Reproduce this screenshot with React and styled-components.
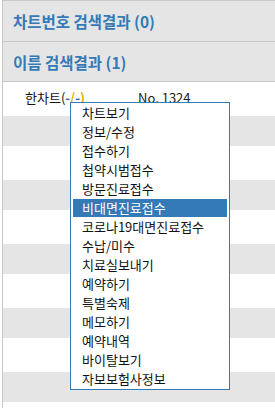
import React from "react";
import styled, { createGlobalStyle } from "styled-components";

const Global = createGlobalStyle`
  html, body { margin: 0; padding: 0; background: #fff; }
  body { font-family: "Noto Sans CJK KR", "Liberation Sans", sans-serif; overflow: hidden; }
`;

const Panel = styled.div`
  position: relative;
  margin-left: 2px;
  height: 408px;
  border-top: 1px solid #c8c8c8;
  border-left: 1px solid #c8c8c8;
  box-sizing: border-box;
  overflow: hidden;
`;

const SectionHeader = styled.div`
  height: ${(p) => p.$h}px;
  display: flex;
  align-items: center;
  padding-left: 10px;
  background: #e5e5e5;
  border-bottom: 1px solid #c8c8c8;
  color: #337ab7;
  font-size: 15.5px;
  font-weight: bold;
  box-sizing: border-box;
`;

const Row = styled.div`
  height: ${(p) => (p.$gray ? 30 : 34)}px;
  background: ${(p) => (p.$gray ? "#e5e5e5" : "#fff")};
  display: flex;
  align-items: center;
  font-size: 13px;
  color: #111;
`;

const Name = styled.span`
  width: 113px;
  padding-left: 22px;
  margin-top: -4px;
`;

const Mark = styled.span`
  color: ${(p) => p.$c};
  font-weight: bold;
`;

const ChartNo = styled.span`
  color: #222;
  margin-top: -4px;
`;

const Menu = styled.ul`
  position: absolute;
  left: 67px;
  top: 101px;
  width: 160px;
  margin: 0;
  padding: 0;
  list-style: none;
  background: #fff;
  border: 1px solid #337ab7;
  box-sizing: border-box;
`;

const Item = styled.li`
  height: 18px;
  line-height: 18px;
  margin: 1px 2px;
  padding-left: 9px;
  font-size: 13px;
  color: ${(p) => (p.$active ? "#fff" : "#111")};
  background: ${(p) => (p.$active ? "#337ab7" : "transparent")};
  white-space: nowrap;
`;

const items = [
  "차트보기",
  "정보/수정",
  "접수하기",
  "첩약시범접수",
  "방문진료접수",
  "비대면진료접수",
  "코로나19대면진료접수",
  "수납/미수",
  "치료실보내기",
  "예약하기",
  "특별숙제",
  "메모하기",
  "예약내역",
  "바이탈보기",
  "자보보험사정보",
];

export default function App() {
  const stripes = Array.from({ length: 9 }, (_, i) => i % 2 === 1);
  return (
    <>
      <Global />
      <Panel>
        <SectionHeader $h={41}>차트번호 검색결과 (0)</SectionHeader>
        <SectionHeader $h={40}>이름 검색결과 (1)</SectionHeader>
        <Row>
          <Name>
            한차트(<Mark $c="#2a5db0">-</Mark>
            <Mark $c="#e0b000">/</Mark>
            <Mark $c="#2a5db0">-</Mark>
            <Mark $c="#e0b000">)</Mark>
          </Name>
          <ChartNo>No. 1324</ChartNo>
        </Row>
        {stripes.map((g, i) => (
          <Row key={i} $gray={!g} />
        ))}
        <Menu>
          {items.map((t) => (
            <Item key={t} $active={t === "비대면진료접수"}>
              {t}
            </Item>
          ))}
        </Menu>
      </Panel>
    </>
  );
}
